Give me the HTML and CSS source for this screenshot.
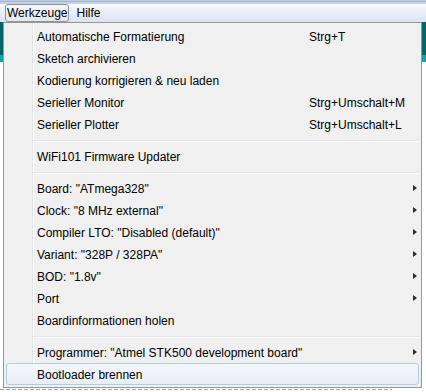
FILE: index.html
```html
<!DOCTYPE html>
<html lang="de">

<head>
    <meta charset="UTF-8">
    <title>Werkzeuge</title>
    <link rel="stylesheet" href="styles.css">
</head>

<body>

    <div class="titlebar"></div>
    <div class="menubar">
        <span class="menubar-item active">Werkzeuge</span>
        <span class="menubar-item">Hilfe</span>
    </div>

    <div class="workspace">
        <div class="side side-left"></div>

        <div class="menu">
            <div class="item"><span>Automatische Formatierung</span><span class="key">Strg+T</span></div>
            <div class="item"><span>Sketch archivieren</span></div>
            <div class="item"><span>Kodierung korrigieren &amp; neu laden</span></div>
            <div class="item"><span>Serieller Monitor</span><span class="key">Strg+Umschalt+M</span></div>
            <div class="item"><span>Serieller Plotter</span><span class="key">Strg+Umschalt+L</span></div>

            <div class="separator"></div>
            <div class="item"><span>WiFi101 Firmware Updater</span></div>
            <div class="separator"></div>

            <div class="item"><span>Board: "ATmega328"</span><span class="key"></span><span class="arrow"></span></div>
            <div class="item"><span>Clock: "8 MHz external"</span><span class="key"></span><span class="arrow"></span></div>
            <div class="item"><span>Compiler LTO: "Disabled (default)"</span><span class="key"></span><span class="arrow"></span></div>
            <div class="item"><span>Variant: "328P / 328PA"</span><span class="key"></span><span class="arrow"></span></div>
            <div class="item"><span>BOD: "1.8v"</span><span class="key"></span><span class="arrow"></span></div>
            <div class="item"><span>Port</span><span class="key"></span><span class="arrow"></span></div>
            <div class="item"><span>Boardinformationen holen</span></div>

            <div class="separator"></div>
            <div class="item"><span>Programmer: "Atmel STK500 development board"</span><span class="key"></span><span class="arrow"></span></div>
            <div class="item hot"><span>Bootloader brennen</span></div>
        </div>

        <div class="side side-right"></div>
    </div>

    <div class="statusline"></div>

</body>

</html>
```

FILE: styles.css
```css
body {
    margin: 0;
    width: 426px;
    height: 392px;
    overflow: hidden;
    background: #fff;
    font-family: "Liberation Sans", Arial, sans-serif;
    font-size: 12px;
    color: #000;
}

.titlebar {
    height: 4px;
    background: linear-gradient(#bfcce0 0, #bfcce0 1px, #a7b6cd 1px, #a7b6cd 2px, #c6d2e5 2px);
}

.menubar {
    display: flex;
    align-items: center;
    gap: 5px;
    height: 18px;
    padding-left: 5px;
    background: linear-gradient(#fafbfd, #eef1f9 30%, #dbe2f1);
}

.menubar-item {
    height: 16px;
    line-height: 16px;
    padding: 0 1px;
    border: 1px solid transparent;
}

.menubar-item.active {
    border-color: #8f9296;
    border-radius: 3px;
    background: linear-gradient(#f6f7fa, #e3e6ee);
}

.workspace {
    display: flex;
    height: 366px;
}

.side {
    background: linear-gradient(#00666a 0, #00666a 33px, #18a2a7 33px, #18a2a7 40px, #fff 40px);
}

.side-left {
    width: 3px;
}

.side-right {
    width: 4px;
}

.menu {
    width: 419px;
    box-sizing: border-box;
    border: 1px solid #979797;
    padding: 2px;
    background: linear-gradient(to right, transparent 28px, #e2e3e3 28px, #e2e3e3 29px, #fff 29px, #fff 30px, transparent 30px), #f0f0f0;
}

.item {
    display: grid;
    grid-template-columns: 272px 1fr 4px;
    align-items: center;
    box-sizing: border-box;
    height: 22px;
    padding: 2px 2px 0 31px;
    line-height: 20px;
    white-space: nowrap;
}

.arrow {
    width: 0;
    height: 0;
    margin-top: -2px;
    border-left: 4px solid #2b2b2b;
    border-top: 3.5px solid transparent;
    border-bottom: 3.5px solid transparent;
}

.item.hot {
    border: 1px solid #aacdf3;
    border-radius: 3px;
    padding: 1px 1px 0 30px;
    background: linear-gradient(#f4f7fc, #e8eef8);
}

.separator {
    height: 10px;
    margin-left: 27px;
    background: linear-gradient(transparent 5px, #e2e3e3 5px, #e2e3e3 6px, #fff 6px, #fff 7px, transparent 7px);
}

.statusline {
    width: 392px;
    height: 1px;
    margin-top: 1px;
    background: repeating-linear-gradient(to right, #a3a3a3 0, #a3a3a3 4px, transparent 4px, transparent 6px);
}
```
